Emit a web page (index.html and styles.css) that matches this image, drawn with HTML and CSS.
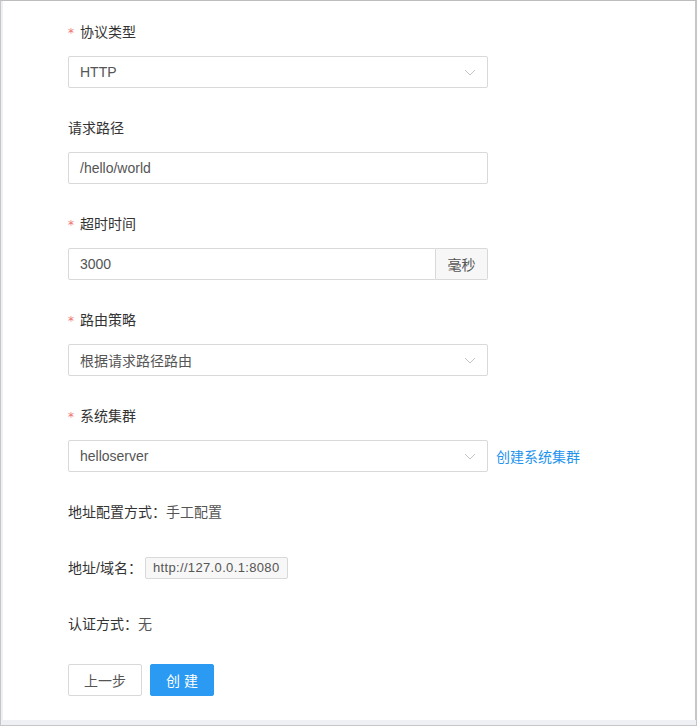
FILE: index.html
```html
<!DOCTYPE html>
<html lang="zh">
<head>
<meta charset="utf-8">
<link rel="stylesheet" href="styles.css">
</head>
<body>
<div class="frame">
  <div class="panel">
    <form class="form">
      <div class="item">
        <div class="label"><span class="req">*</span>协议类型</div>
        <div class="select">
          <span class="value">HTTP</span>
          <svg class="arrow" width="12" height="7" viewBox="0 0 12 7"><path d="M1 1 L6 6 L11 1" fill="none" stroke="#c4c4c4" stroke-width="1"/></svg>
        </div>
      </div>
      <div class="item">
        <div class="label">请求路径</div>
        <div class="input"><span class="value">/hello/world</span></div>
      </div>
      <div class="item">
        <div class="label"><span class="req">*</span>超时时间</div>
        <div class="group">
          <div class="input grow"><span class="value">3000</span></div>
          <div class="addon">毫秒</div>
        </div>
      </div>
      <div class="item">
        <div class="label"><span class="req">*</span>路由策略</div>
        <div class="select">
          <span class="value">根据请求路径路由</span>
          <svg class="arrow" width="12" height="7" viewBox="0 0 12 7"><path d="M1 1 L6 6 L11 1" fill="none" stroke="#c4c4c4" stroke-width="1"/></svg>
        </div>
      </div>
      <div class="item">
        <div class="label"><span class="req">*</span>系统集群</div>
        <div class="row">
          <div class="select">
            <span class="value">helloserver</span>
            <svg class="arrow" width="12" height="7" viewBox="0 0 12 7"><path d="M1 1 L6 6 L11 1" fill="none" stroke="#c4c4c4" stroke-width="1"/></svg>
          </div>
          <a class="link">创建系统集群</a>
        </div>
      </div>
      <div class="info"><span class="key">地址配置方式：</span><span class="val">手工配置</span></div>
      <div class="info"><span class="key">地址/域名：</span><span class="tag">http://127.0.0.1:8080</span></div>
      <div class="info"><span class="key">认证方式：</span><span class="val">无</span></div>
      <div class="actions">
        <button type="button" class="btn">上一步</button>
        <button type="button" class="btn primary">创 建</button>
      </div>
    </form>
  </div>
</div>
</body>
</html>
```
FILE: styles.css
```css
* { box-sizing: border-box; }
html, body { margin: 0; padding: 0; }
body {
  font-family: "Liberation Sans", "Noto Sans CJK SC", sans-serif;
  font-size: 14px;
  color: #333;
}
.frame {
  width: 697px;
  height: 726px;
  border: 1px solid #c6c6c6;
  border-top-color: #bdbdbd;
  background: #eef0f4;
  padding: 0 0 5px 2px;
  display: flex;
}
.panel {
  flex: 1;
  background: #fff;
  border-right: 1px solid #c6c6c6;
  padding: 15px 0 0 65px;
}
.form { width: 520px; }
.item { margin-bottom: 24px; }
.label {
  height: 32px;
  line-height: 32px;
  margin-bottom: 8px;
  color: #333;
}
.req {
  color: #f0736b;
  font-family: "DejaVu Sans", sans-serif;
  font-size: 12px;
  margin-right: 4px;
  display: inline-block;
  width: 8px;
}
.select, .input {
  width: 420px;
  height: 32px;
  border: 1px solid #d9d9d9;
  border-radius: 2px;
  display: flex;
  align-items: center;
  padding: 0 11px;
  color: #555;
  background: #fff;
}
.select { justify-content: space-between; }
.group { display: flex; width: 420px; }
.group .input.grow {
  flex: 1;
  width: auto;
  border-radius: 2px 0 0 2px;
}
.addon {
  width: 52px;
  height: 32px;
  border: 1px solid #d9d9d9;
  border-left: none;
  border-radius: 0 2px 2px 0;
  background: #f7f7f7;
  color: #555;
  display: flex;
  align-items: center;
  justify-content: center;
}
.row { display: flex; align-items: center; gap: 8px; }
.link { color: #2394ee; cursor: pointer; }
.info {
  height: 32px;
  line-height: 32px;
  margin-bottom: 24px;
  display: flex;
  align-items: center;
}
.info .key { color: #333; }
.info .val { color: #555; }
.tag {
  display: inline-block;
  height: 22px;
  line-height: 20px;
  margin-left: 3px;
  padding: 0 7px;
  border: 1px solid #d9d9d9;
  border-radius: 2px;
  background: #f7f7f7;
  font-size: 13px;
  letter-spacing: 0.35px;
  color: #555;
}
.actions { display: flex; gap: 8px; }
.btn {
  height: 32px;
  border: 1px solid #d9d9d9;
  border-radius: 2px;
  background: #fff;
  color: #555;
  font-family: inherit;
  font-size: 14px;
  padding: 0 15px;
  width: 74px;
}
.btn.primary {
  width: 64px;
  background: #2b9af3;
  border-color: #2b9af3;
  color: #fff;
}
```
